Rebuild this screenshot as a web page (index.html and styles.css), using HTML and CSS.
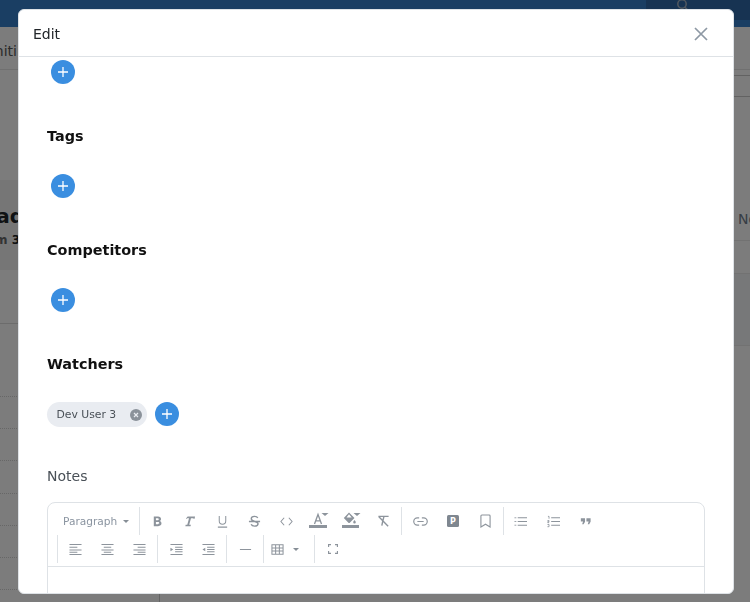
FILE: index.html
```html
<!DOCTYPE html>
<html lang="en">
<head>
<meta charset="utf-8">
<title>Edit</title>
<link rel="stylesheet" href="styles.css">
</head>
<body>
<div class="page">
  <header class="topbar">
    <div class="topbar-search">
      <svg class="search-icon" width="14" height="14" viewBox="0 0 14 14"><circle cx="6" cy="4" r="4.2"/><path d="M9 7.2l3.5 3.5"/></svg>
    </div>
  </header>
  <nav class="tabs"><div class="cut tab-text">Initi</div></nav>
  <main class="content">
    <div class="left">
      <div class="lead-card">
        <div class="cut lead-title">Lead</div>
        <div class="cut lead-sub">from&nbsp;<span class="lead-num">3</span></div>
      </div>
      <div class="row row-tall"></div>
      <div class="row row-gap"></div>
      <div class="row row-dot"></div>
      <div class="row row-dot"></div>
      <div class="row row-dot"></div>
      <div class="row row-dot"></div>
      <div class="row row-dot"></div>
      <div class="row row-dot"></div>
    </div>
    <div class="right">
      <div class="r-line r-a"></div>
      <div class="r-line r-b"></div>
      <div class="r-head">No</div>
      <div class="r-gap"></div>
      <div class="r-band"></div>
    </div>
  </main>
</div>

<div class="backdrop"></div>

<section class="modal">
  <div class="modal-header">
    <h2 class="modal-title">Edit</h2>
    <svg class="close" width="16" height="16" viewBox="0 0 16 16"><path d="M2 2l12 12M14 2L2 14"/></svg>
  </div>
  <div class="modal-body">
    <button class="add"><svg width="12" height="12" viewBox="0 0 12 12"><path d="M6 1v10M1 6h10"/></svg></button>

    <div class="section">
      <h3 class="section-title">Tags</h3>
      <button class="add"><svg width="12" height="12" viewBox="0 0 12 12"><path d="M6 1v10M1 6h10"/></svg></button>
    </div>

    <div class="section">
      <h3 class="section-title">Competitors</h3>
      <button class="add"><svg width="12" height="12" viewBox="0 0 12 12"><path d="M6 1v10M1 6h10"/></svg></button>
    </div>

    <div class="section">
      <h3 class="section-title">Watchers</h3>
      <div class="chips">
        <span class="chip">Dev User 3
          <svg class="chip-x" width="12" height="12" viewBox="0 0 12 12"><circle cx="6" cy="6" r="6"/><path d="M4 4l4 4M8 4l-4 4"/></svg>
        </span>
        <button class="add"><svg width="12" height="12" viewBox="0 0 12 12"><path d="M6 1v10M1 6h10"/></svg></button>
      </div>
    </div>

    <div class="notes-label">Notes</div>

    <div class="editor">
      <div class="toolbar">
        <div class="tool-row">
          <div class="heading-drop">Paragraph<span class="caret"></span></div>
          <span class="sep"></span>
          <span class="btn"><svg class="ic solid" viewBox="0 0 14 14"><path fill-rule="evenodd" d="M3 1.500h4.600c2 0 3.200 1 3.200 2.700 0 1-.5 1.800-1.400 2.200 1.200.4 1.900 1.300 1.900 2.600 0 2-1.400 3-3.600 3H3zm2.300 2v2.200h1.900c.8 0 1.200-.4 1.200-1.100s-.4-1.100-1.200-1.100zm0 4v2.500h2.200c.9 0 1.400-.5 1.400-1.300s-.5-1.200-1.400-1.200z"/></svg></span>
          <span class="btn"><svg class="ic solid" viewBox="0 0 14 14"><path d="M5 1.500h8l-.5 2.500h-1.200l-.2-.6H8.600l-1.900 7.100h1.800l-.4 1.500H2.500l.4-1.500h1.700l1.900-7.100H4.700l-.6.6H3z"/></svg></span>
          <span class="btn"><svg class="ic" viewBox="0 0 14 14"><path d="M3.500 1v5.500a3.500 3.500 0 0 0 7 0V1"/><path class="rule" d="M2 13h10"/></svg></span>
          <span class="btn"><svg class="ic heavy" viewBox="0 0 14 14"><path d="M10.500 3.200C10 2 8.700 1.500 7 1.500c-2 0-3.500 1-3.500 2.600 0 3.600 7.300 2.200 7.300 5.300 0 1.700-1.600 2.600-3.700 2.600-1.800 0-3.200-.7-3.700-2M1 7h12"/></svg></span>
          <span class="btn"><svg class="ic" viewBox="0 0 14 14"><path d="M4.500 3L1 7l3.500 4M9.500 3L13 7l-3.500 4"/></svg></span>
          <span class="btn"><svg class="ic-wide" viewBox="0 0 20 18"><path class="fill" d="M0 14h18v3H0z"/><path class="line" d="M5.500 13L9 3.500 12.500 13M6.800 9.800h4.500"/><path class="fill" d="M12.500 2h7l-3.500 3z"/></svg></span>
          <span class="btn"><svg class="ic-wide" viewBox="0 0 20 18"><path class="fill" d="M1 14h17v3H1z"/><path class="fill" fill-rule="evenodd" d="M8 1.500l5.500 5.500-4.700 4.700a1 1 0 0 1-1.400 0L2.800 7.100zm0 1.800L5.500 6.500h5.200z"/><path class="fill" d="M13.500 9c.8 1 1.300 1.700 1.300 2.300a1.300 1.300 0 0 1-2.600 0c0-.6.500-1.300 1.300-2.300zM12.500 2h7l-3.500 3z"/></svg></span>
          <span class="btn"><svg class="ic heavy" viewBox="0 0 14 14"><path d="M1.500 1.500h11M7.500 1.500L6 7.500 5.200 11.500M2 2l10 10"/></svg></span>
          <span class="sep"></span>
          <span class="btn"><svg class="ic-link" viewBox="0 0 16 10"><path d="M6.500 1H4.500a4 4 0 0 0 0 8h2M9.500 1h2a4 4 0 0 1 0 8h-2M4.500 5h7"/></svg></span>
          <span class="btn"><span class="p-box">P</span></span>
          <span class="btn"><svg class="ic-tall" viewBox="0 0 12 14"><path d="M1 1.500a1 1 0 0 1 1-1h8a1 1 0 0 1 1 1v12L6 10.500 1 13.500z"/></svg></span>
          <span class="sep"></span>
          <span class="btn shift"><svg class="ic" viewBox="0 0 14 14"><path d="M4 3h10M4 7h10M4 11h10"/><path class="dots" d="M.5 3h2M.5 7h2M.5 11h2"/></svg></span>
          <span class="btn shift"><svg class="ic" viewBox="0 0 14 14"><path d="M4.500 3H14M4.500 7H14M4.500 11H14"/><path class="dots" d="M1 1.500h1.200v2.500M.5 6h1.700v1.200H.8v1h1.500M.5 10.200h1.700v2.400H.5"/></svg></span>
          <span class="btn shift"><svg class="ic solid" viewBox="0 0 14 14"><path d="M2 3.500h4.500v3.700L5 10H3.400l1-3H2zM8 3.500h4.500v3.700L11 10H9.400l1-3H8z"/></svg></span>
        </div>
        <div class="tool-row">
          <span class="sep"></span>
          <span class="btn"><svg class="ic" viewBox="0 0 14 14"><path d="M.5 1.500h13M.5 4.500h8.500M.5 7.500h13M.5 10h8.500M.5 12.500h13"/></svg></span>
          <span class="btn"><svg class="ic" viewBox="0 0 14 14"><path d="M.5 1.500h13M3 4.500h8M.5 7.500h13M3 10h8M.5 12.500h13"/></svg></span>
          <span class="btn"><svg class="ic" viewBox="0 0 14 14"><path d="M.5 1.500h13M5 4.500h8.500M.5 7.500h13M5 10h8.500M.5 12.500h13"/></svg></span>
          <span class="sep"></span>
          <span class="btn"><svg class="ic" viewBox="0 0 14 14"><path d="M.5 1.500h13M5.500 4.500h8M5.500 7h8M5.500 9.500h8M.5 12.500h13"/><path class="fill" d="M.5 5l3 2-3 2z"/></svg></span>
          <span class="btn"><svg class="ic" viewBox="0 0 14 14"><path d="M.5 1.500h13M5.500 4.500h8M5.500 7h8M5.500 9.500h8M.5 12.500h13"/><path class="fill" d="M3.500 5l-3 2 3 2z"/></svg></span>
          <span class="sep"></span>
          <span class="btn"><svg class="ic" viewBox="0 0 14 14"><path d="M1 7h12"/></svg></span>
          <span class="sep"></span>
          <span class="table-drop"><svg class="ic" viewBox="0 0 14 14"><path d="M1 2h12v10H1zM1 5.300h12M1 8.700h12M5 2v10M9 2v10"/></svg><span class="caret"></span></span>
          <span class="sep"></span>
          <span class="btn"><svg class="ic-small" viewBox="0 0 10 10"><path d="M.5 3V.5H3M7 .5h2.500V3M9.500 7v2.500H7M3 9.500H.5V7"/></svg></span>
        </div>
      </div>
      <div class="editor-area"></div>
    </div>
  </div>
</section>
</body>
</html>
```
FILE: styles.css
```css
* { box-sizing: border-box; }
html, body { margin: 0; padding: 0; height: 100%; overflow: hidden; }
body { font-family: "DejaVu Sans", sans-serif; background: #f8f8f8; color: #212529; }

/* page behind the dialog */
.page { height: 602px; display: flex; flex-direction: column; overflow: hidden; }
.topbar { height: 27px; flex: none; background: #347dc6; display: flex; justify-content: flex-end; }
.topbar-search { width: 104px; height: 20px; background: #2e67a4; display: flex; justify-content: center; padding-right: 30px; }
.search-icon { fill: none; stroke: #a3b0bf; stroke-width: 1.500; }
.tabs { height: 43px; flex: none; border-bottom: 1px solid #e0e0e0; display: flex; align-items: center; font-size: 14px; color: #555; padding-top: 5px; }
.cut { width: 18px; display: flex; justify-content: flex-end; white-space: nowrap; }
.tab-text { width: 17px; }
.content { flex: 1; display: flex; min-height: 0; }
.left { width: 160px; flex: none; border-right: 1px solid #c8c8c8; padding-top: 110px; }
.lead-card { height: 90px; background: #ececec; padding-top: 25px; }
.lead-title { width: 24px; font-size: 20px; font-weight: 700; color: #212529; line-height: 23px; }
.lead-sub { width: 20px; font-size: 12px; font-weight: 700; color: #666; margin-top: 4px; line-height: 17px; }
.lead-num { color: #212529; }
.row-tall { height: 54px; border-bottom: 1px solid #d8d8d8; }
.row-gap { height: 73px; border-bottom: 1px dotted #cfcfcf; }
.row-dot { height: 32.200px; border-bottom: 1px dotted #cfcfcf; }
.right { flex: 1; display: flex; flex-direction: column; align-items: stretch; }
.r-line { border-bottom: 1px solid #c4c4c4; }
.r-a { height: 6px; }
.r-b { height: 21px; }
.r-head { height: 144px; padding-top: 113px; padding-left: 578px; font-size: 14px; color: #6c7a8a; border-bottom: 1px solid #e4e4e4; line-height: 18px; white-space: nowrap; overflow: hidden; }
.r-gap { height: 33px; border-bottom: 1px solid #e4e4e4; }
.r-band { height: 72px; border-bottom: 1px solid #e4e4e4; background: #eef0f2; }

.backdrop { position: fixed; inset: 0; background: rgba(0, 0, 0, .5); }

/* dialog */
.modal { position: fixed; left: 18px; top: 9px; width: 716px; height: 585px; background: #fff; border: 1px solid #dee2e6; border-radius: 6px; display: flex; flex-direction: column; overflow: hidden; }
.modal-header { height: 47px; flex: none; border-bottom: 1px solid #dee2e6; display: flex; align-items: center; justify-content: space-between; padding: 1px 24px 0 14px; }
.modal-title { margin: 0; font-size: 14px; font-weight: 400; color: #212529; }
.close { fill: none; stroke: #8d98a4; stroke-width: 1.700; }
.modal-body { flex: 1; min-height: 0; overflow: hidden; padding: 3px 28px 0 28px; }
.add { display: flex; align-items: center; justify-content: center; width: 24px; height: 24px; border: 0; padding: 0; border-radius: 50%; background: #3a8ee0; margin-left: 4px; flex: none; }
.add svg { fill: none; stroke: #fff; stroke-width: 1.300; }
.section { margin-top: 42px; }
.section-title { margin: 0 0 28px; font-size: 14.400px; line-height: 20px; font-weight: 700; color: #111; }
.chips { display: flex; align-items: flex-start; gap: 4px; }
.chips .add { margin-left: 4px; }
.chip { width: 100px; height: 25px; border-radius: 13px; background: #e9ecf1; display: flex; align-items: center; justify-content: space-between; padding: 0 5px 1px 9.500px; font-size: 10.800px; color: #495057; }
.chip-x { flex: none; margin-top: 1px; }
.chip-x circle { fill: #8b929a; }
.chip-x path { fill: none; stroke: #e9ecf1; stroke-width: 1.200; }
.notes-label { margin-top: 39px; font-size: 14px; line-height: 20px; color: #495057; }

/* editor */
.editor { margin-top: 16px; border: 1px solid #dee2e6; border-radius: 8px; }
.toolbar { padding: 4px 0 3px 8px; border-bottom: 1px solid #dee2e6; }
.tool-row { display: flex; align-items: stretch; height: 28px; }
.heading-drop { width: 81px; display: flex; align-items: center; padding-left: 7px; font-size: 10.600px; color: #8a94a0; white-space: nowrap; }
.heading-drop .caret { margin-left: 6px; }
.caret { display: inline-block; width: 0; height: 0; border-left: 3.500px solid transparent; border-right: 3.500px solid transparent; border-top: 3.500px solid #868e96; flex: none; }
.sep { width: 1px; flex: none; background: #dee2e6; margin: 0 2px 0 1.500px; }
.tool-row > .sep:first-child { margin: 0 1px 0 1px; }
.btn { width: 32.300px; flex: none; display: flex; align-items: center; justify-content: center; }
.btn.shift { margin-left: -1px; margin-right: 1px; }
.table-drop { width: 46px; flex: none; display: flex; align-items: center; gap: 9px; padding-left: 5px; }
.ic, .ic-wide, .ic-link, .ic-small, .ic-tall { fill: none; stroke: #8d949c; stroke-width: 1.100; flex: none; }
.ic { width: 13px; height: 13px; }
.ic.heavy { stroke-width: 1.500; }
.ic.solid, .ic-wide .fill, .ic .fill { fill: #8d949c; stroke: none; }
.ic .rule { stroke-width: 1.500; }
.ic .dots { stroke-width: .9; }
.ic-wide { width: 20px; height: 18px; margin-top: -2px; }
.ic-wide .line { fill: none; stroke-width: 1.300; }
.ic-link { width: 15px; height: 9px; stroke-width: 1.300; }
.ic-small { width: 10px; height: 10px; stroke-width: 1.300; }
.ic-tall { width: 11px; height: 14px; stroke-width: 1.200; }
.p-box { width: 12px; height: 12px; border-radius: 1.500px; background: #7f8790; color: #fff; font-size: 8px; font-weight: 700; display: flex; align-items: center; justify-content: center; }
.editor-area { height: 200px; }
```
